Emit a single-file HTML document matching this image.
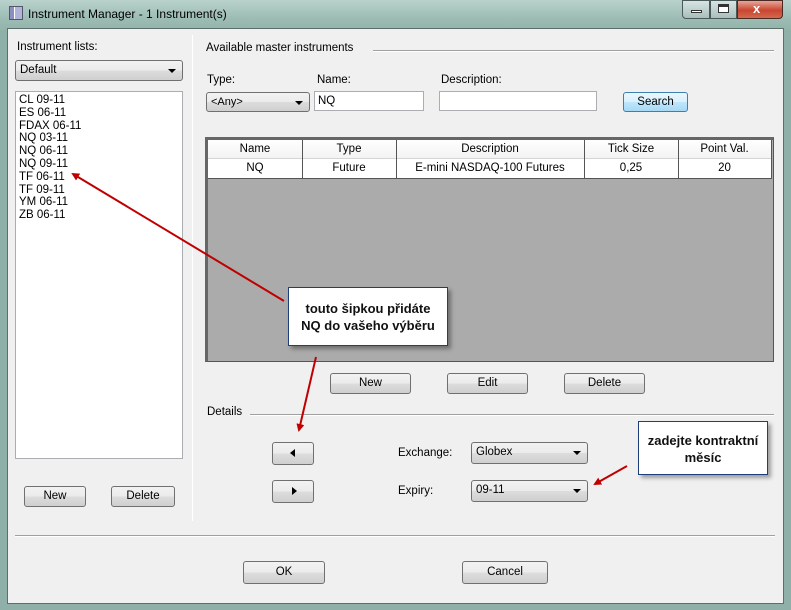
<!DOCTYPE html>
<html><head><meta charset="utf-8"><style>
*{box-sizing:border-box;margin:0;padding:0}
body{width:791px;height:610px;overflow:hidden;font-family:"Liberation Sans",sans-serif;font-size:11.5px;color:#000;background:#8fb0a8;position:relative}
.a{position:absolute}
.tb{left:0;top:0;width:791px;height:30px;background:linear-gradient(180deg,#b9d2cc,#9dbdb4 60%,#93b4ab)}
.client{left:7px;top:28px;width:777px;height:576px;background:#f0f0f0;border:1px solid #5c6f6a}
.btn{position:absolute;border:1px solid #707070;border-radius:3px;background:linear-gradient(#f2f2f2,#ebebeb 50%,#dddddd 50%,#cfcfcf);text-align:center;font-size:11.5px}
.inp{position:absolute;background:#fff;border:1px solid #abadb3;font-size:11.5px;padding:3px 3px}
.cb{position:absolute;border:1px solid #707070;border-radius:3px;background:linear-gradient(#f2f2f2,#ebebeb 50%,#dddddd 50%,#cfcfcf);font-size:11.5px;padding:3px 4px}
.cb:after{content:"";position:absolute;right:6px;top:8px;border-left:4px solid transparent;border-right:4px solid transparent;border-top:4px solid #000}
.call{position:absolute;background:#fff;border:1px solid #1f3f7a;box-shadow:3px 3px 4px rgba(0,0,0,.35);font-weight:bold;font-size:13px;text-align:center;line-height:17px;color:#111}
</style></head><body>
<div class="a tb"></div>
<div class="a" style="left:9px;top:6px;width:14px;height:14px;background:linear-gradient(90deg,#8a8fc0 0 4px,#fff 4px 5px,#b0b4d8 5px);border:1px solid #556"></div>
<div class="a" style="left:28px;top:7px;font-size:12px;color:#000">Instrument Manager - 1 Instrument(s)</div>
<div class="a" style="left:682px;top:0;width:28px;height:19px;border:1px solid #4a5a58;border-radius:0 0 0 4px;background:linear-gradient(#d6e4e2,#a9bfbb)"></div>
<div class="a" style="left:691px;top:10px;width:11px;height:3px;background:#fff;border:1px solid #333"></div>
<div class="a" style="left:710px;top:0;width:27px;height:19px;border:1px solid #4a5a58;background:linear-gradient(#d6e4e2,#a9bfbb)"></div>
<div class="a" style="left:718px;top:4px;width:11px;height:9px;border:1px solid #333;border-top-width:3px;background:#fff"></div>
<div class="a" style="left:737px;top:0;width:46px;height:19px;border:1px solid #4a2a22;border-radius:0 0 4px 0;background:linear-gradient(#e6a79a,#c9452f 55%,#d46a4e)"></div>
<div class="a" style="left:753px;top:1px;color:#fff;font-weight:bold;font-size:13px">x</div>
<div class="a client"></div>

<div class="a" style="left:17px;top:41px">Instrument lists:</div>
<div class="cb" style="left:15px;top:60px;width:168px;height:21px">Default</div>
<div class="inp" style="left:15px;top:91px;width:168px;height:368px;padding:2px 3px;line-height:12.8px">CL 09-11<br>ES 06-11<br>FDAX 06-11<br>NQ 03-11<br>NQ 06-11<br>NQ 09-11<br>TF 06-11<br>TF 09-11<br>YM 06-11<br>ZB 06-11</div>
<div class="btn" style="left:24px;top:486px;width:62px;height:21px;line-height:19px">New</div>
<div class="btn" style="left:111px;top:486px;width:64px;height:21px;line-height:19px">Delete</div>
<div class="a" style="left:192px;top:35px;width:1px;height:486px;background:#a0a0a0;border-right:1px solid #fff"></div>

<div class="a" style="left:206px;top:42px">Available master instruments</div>
<div class="a" style="left:373px;top:50px;width:401px;height:2px;border-top:1px solid #a0a0a0;border-bottom:1px solid #fff"></div>
<div class="a" style="left:207px;top:74px">Type:</div>
<div class="cb" style="left:206px;top:92px;width:104px;height:20px;font-size:11px">&lt;Any&gt;</div>
<div class="a" style="left:317px;top:74px">Name:</div>
<div class="inp" style="left:314px;top:91px;width:110px;height:20px">NQ</div>
<div class="a" style="left:441px;top:74px">Description:</div>
<div class="inp" style="left:439px;top:91px;width:158px;height:20px"></div>
<div class="btn" style="left:623px;top:92px;width:65px;height:20px;line-height:18px;border-color:#3c7fb1;background:linear-gradient(#eaf6fd,#d9f0fc 50%,#bee6fd 50%,#a7d9f5)">Search</div>

<div class="a" style="left:205px;top:137px;width:569px;height:225px;background:#ababab;border:1px solid #555;border-top:3px solid #666;border-left:3px solid #666"></div>
<div class="a" style="left:208px;top:140px;width:564px;height:39px;background:#fff"></div>
<div class="a" style="left:208px;top:140px;width:564px;height:19px;background:linear-gradient(#fff,#f3f3f3);border-bottom:1px solid #d5d5d5"></div>
<div class="a" style="left:208px;top:159px;width:564px;height:20px;border-bottom:1px solid #555"></div>
<div class="a" style="left:302px;top:140px;width:1px;height:39px;background:#555"></div>
<div class="a" style="left:396px;top:140px;width:1px;height:39px;background:#555"></div>
<div class="a" style="left:584px;top:140px;width:1px;height:39px;background:#555"></div>
<div class="a" style="left:678px;top:140px;width:1px;height:39px;background:#555"></div>
<div class="a" style="left:771px;top:140px;width:1px;height:39px;background:#555"></div>
<div class="a" style="left:208px;top:143px;width:94px;text-align:center">Name</div>
<div class="a" style="left:302px;top:143px;width:94px;text-align:center">Type</div>
<div class="a" style="left:396px;top:143px;width:188px;text-align:center">Description</div>
<div class="a" style="left:584px;top:143px;width:94px;text-align:center">Tick Size</div>
<div class="a" style="left:678px;top:143px;width:93px;text-align:center">Point Val.</div>
<div class="a" style="left:208px;top:162px;width:94px;text-align:center">NQ</div>
<div class="a" style="left:302px;top:162px;width:94px;text-align:center">Future</div>
<div class="a" style="left:396px;top:162px;width:188px;text-align:center">E-mini NASDAQ-100 Futures</div>
<div class="a" style="left:584px;top:162px;width:94px;text-align:center">0,25</div>
<div class="a" style="left:678px;top:162px;width:93px;text-align:center">20</div>

<div class="btn" style="left:330px;top:373px;width:81px;height:21px;line-height:19px">New</div>
<div class="btn" style="left:447px;top:373px;width:81px;height:21px;line-height:19px">Edit</div>
<div class="btn" style="left:564px;top:373px;width:81px;height:21px;line-height:19px">Delete</div>
<div class="a" style="left:207px;top:406px">Details</div>
<div class="a" style="left:250px;top:414px;width:524px;height:2px;border-top:1px solid #a0a0a0;border-bottom:1px solid #fff"></div>

<div class="btn" style="left:272px;top:442px;width:42px;height:23px"><div class="a" style="left:17px;top:6px;border-top:4px solid transparent;border-bottom:4px solid transparent;border-right:5px solid #000"></div></div>
<div class="btn" style="left:272px;top:480px;width:42px;height:23px"><div class="a" style="left:19px;top:6px;border-top:4px solid transparent;border-bottom:4px solid transparent;border-left:5px solid #000"></div></div>
<div class="a" style="left:398px;top:447px">Exchange:</div>
<div class="cb" style="left:471px;top:442px;width:117px;height:22px">Globex</div>
<div class="a" style="left:398px;top:485px">Expiry:</div>
<div class="cb" style="left:471px;top:480px;width:117px;height:22px">09-11</div>

<div class="a" style="left:15px;top:535px;width:760px;height:2px;border-top:1px solid #a0a0a0;border-bottom:1px solid #fff"></div>
<div class="btn" style="left:243px;top:561px;width:82px;height:23px;line-height:21px">OK</div>
<div class="btn" style="left:462px;top:561px;width:86px;height:23px;line-height:21px">Cancel</div>

<svg class="a" style="left:0;top:0" width="791" height="610">
<defs><marker id="m" markerWidth="8" markerHeight="8" refX="6" refY="4" orient="auto" markerUnits="userSpaceOnUse"><path d="M0,0 L8,4 L0,8 z" fill="#c00000"/></marker></defs>
<g stroke="#c00000" stroke-width="2" fill="none" marker-end="url(#m)">
<line x1="284" y1="301" x2="73" y2="174"/>
<line x1="316" y1="357" x2="299" y2="430"/>
<line x1="627" y1="466" x2="595" y2="484"/>
</g></svg>
<div class="call" style="left:288px;top:287px;width:160px;height:59px;padding-top:12px">touto šipkou přidáte<br>NQ do vašeho výběru</div>
<div class="call" style="left:638px;top:421px;width:130px;height:54px;padding-top:10px">zadejte kontraktní<br>měsíc</div>
</body></html>
